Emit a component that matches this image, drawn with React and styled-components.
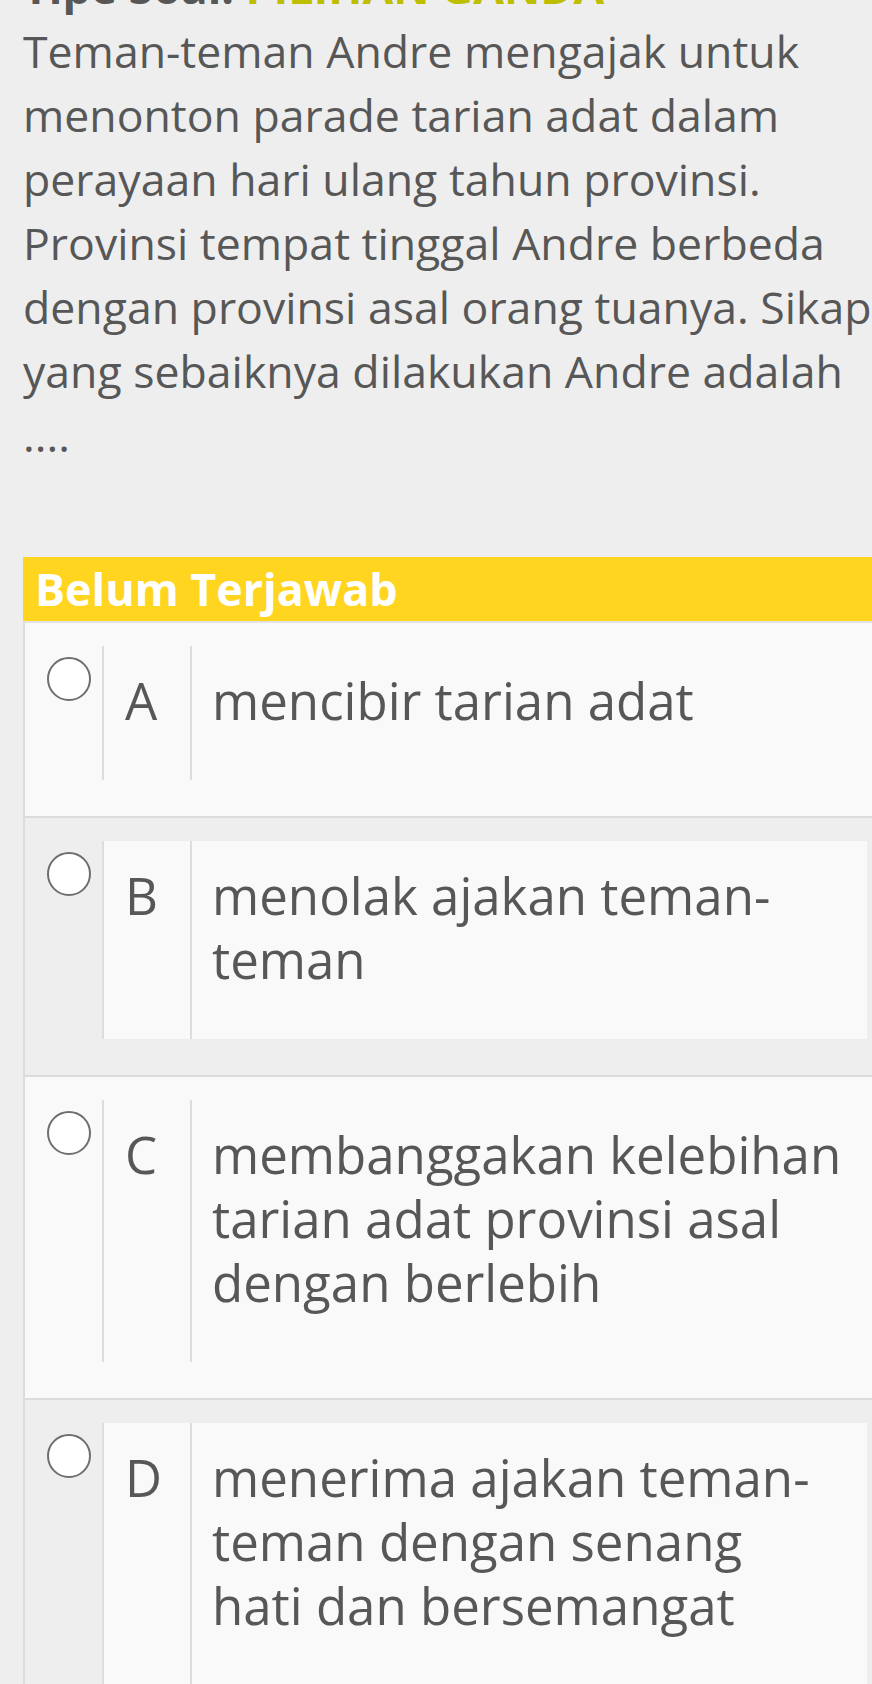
import React from 'react';
import styled, {createGlobalStyle} from 'styled-components';

const GlobalStyle = createGlobalStyle`
    html, body {
        margin: 0;
        padding: 0;
        background-color: #eeeeee;
        overflow-x: hidden;
    }
    body {
        font-family: "Open Sans", "Noto Sans", sans-serif;
        color: #575757;
    }
`;

const Page = styled.div`
    width: 884px;
    box-sizing: border-box;
    padding-left: 23px;
    margin-top: -45px;
`;

const QuestionType = styled.div`
    font-size: 44.6px;
    line-height: 64px;
    font-weight: 700;
    color: #575757;
    white-space: nowrap;
`;

const TypeValue = styled.span`
    color: #bebe00;
`;

const Question = styled.p`
    margin: 0 0 90px 0;
    font-size: 44.6px;
    line-height: 64px;
`;

const StatusBar = styled.div`
    background-color: #ffd51f;
    color: #ffffff;
    font-size: 44.8px;
    font-weight: 700;
    line-height: 64px;
    padding: 0 12px;
    border-bottom: 2px solid #e3e3e3;
`;

const OptionRow = styled.div`
    display: flex;
    align-items: flex-start;
    background-color: ${props => props.striped ? '#eeeeee' : '#f9f9f9'};
    border-left: 2px solid #dcdcdc;
    border-bottom: 2px solid #dcdcdc;
    padding: 23px 17px 36px 0;
`;

const Radio = styled.span`
    flex-shrink: 0;
    width: 44px;
    height: 44px;
    box-sizing: border-box;
    border: 2px solid #6e6e6e;
    border-radius: 50%;
    background-color: #ffffff;
    margin: 11px 11px 0 22px;
`;

const OptionBox = styled.div`
    flex: 1;
    display: flex;
    background-color: #f9f9f9;
`;

const Letter = styled.div`
    flex-shrink: 0;
    width: 90px;
    box-sizing: border-box;
    border-left: 2px solid #dddddd;
    border-right: 2px solid #dddddd;
    padding: 22px 0 48px 21px;
    font-size: 51px;
    line-height: 64px;
`;

const Answer = styled.div`
    flex: 1;
    padding: 22px 22px 48px 20px;
    font-size: 51px;
    line-height: 64px;
`;

const options = [
    {key: 'A', text: 'mencibir tarian adat'},
    {key: 'B', text: 'menolak ajakan teman-teman'},
    {key: 'C', text: 'membanggakan kelebihan tarian adat provinsi asal dengan berlebih'},
    {key: 'D', text: 'menerima ajakan teman-teman dengan senang hati dan bersemangat'}
];

export default function App() {
    return (<>
        <GlobalStyle/>
        <Page>
            <QuestionType>Tipe Soal: <TypeValue>PILIHAN GANDA</TypeValue></QuestionType>
            <Question>
                Teman-teman Andre mengajak untuk menonton parade tarian adat dalam perayaan hari ulang tahun provinsi. Provinsi tempat tinggal Andre berbeda dengan provinsi asal orang tuanya. Sikap yang sebaiknya dilakukan Andre adalah ....
            </Question>
            <StatusBar>Belum Terjawab</StatusBar>
            {options.map((opt, i) => (
                <OptionRow key={opt.key} striped={i % 2 === 1}>
                    <Radio/>
                    <OptionBox>
                        <Letter>{opt.key}</Letter>
                        <Answer>{opt.text}</Answer>
                    </OptionBox>
                </OptionRow>
            ))}
        </Page>
    </>);
}
